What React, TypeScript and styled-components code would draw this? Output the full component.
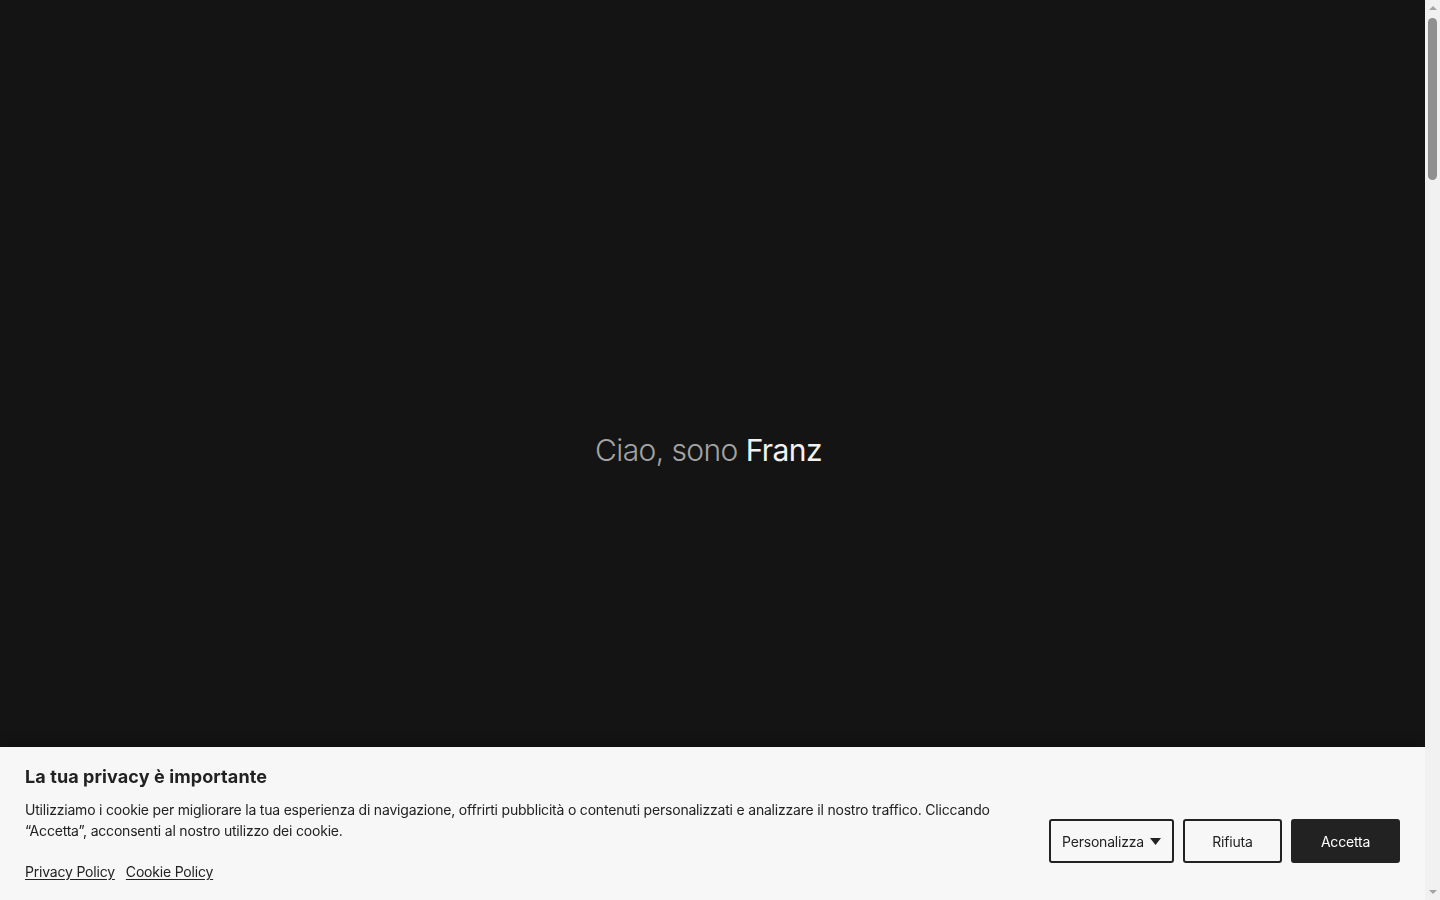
import React from 'react'
import styled, { createGlobalStyle } from 'styled-components'

const GlobalStyle = createGlobalStyle`
  html, body {
    margin: 0;
    padding: 0;
    background: #141414;
    font-family: Inter, "Noto Sans", "Liberation Sans", sans-serif;
  }
  * { box-sizing: border-box; }
`

// the window scroll rail, as the browser draws it
const ScrollRail = styled.div`
  position: fixed;
  top: 0;
  right: 0;
  width: 15px;
  height: 100vh;
  background: #f1f1f1;
  display: flex;
  flex-direction: column;
  align-items: center;
  z-index: 20;
`

const Arrow = styled.div<{ $down?: boolean }>`
  width: 0;
  height: 0;
  margin: ${(p) => (p.$down ? 'auto 0 6px' : '6px 0 0')};
  border-left: 4px solid transparent;
  border-right: 4px solid transparent;
  ${(p) => (p.$down ? 'border-top: 4px solid #a3a3a3;' : 'border-bottom: 4px solid #a3a3a3;')}
`

const Thumb = styled.div`
  width: 9px;
  height: 162px;
  margin-top: 8px;
  border-radius: 5px;
  background: #8f8f8f;
`

const Page = styled.main`
  min-height: 4830px;
  margin-right: 15px;
  background: #141414;
`

const Hero = styled.section`
  height: 900px;
  display: flex;
  align-items: center;
  justify-content: center;
`

const Greeting = styled.h1`
  margin: 0 8px 0 0;
  font-size: 30px;
  font-weight: 300;
  letter-spacing: -0.6px;
  color: #a3a3a3;
`

const Name = styled.span`
  color: #f2f2f2;
  font-weight: 400;
`

const Banner = styled.aside`
  position: fixed;
  left: 0;
  right: 15px;
  bottom: 0;
  height: 153px;
  background: #f7f7f7;
  box-shadow: 0 -2px 12px rgba(0, 0, 0, 0.35);
  padding: 20px 25px 0 25px;
  display: flex;
  align-items: flex-start;
  gap: 40px;
  color: #222;
  z-index: 10;
`

const Texts = styled.div`
  flex: 1;
  min-width: 0;
`

const Title = styled.h2`
  margin: 0 0 12px;
  font-size: 18px;
  font-weight: 700;
  letter-spacing: 0.1px;
  line-height: 20px;
`

const Body = styled.p`
  margin: 0;
  font-size: 14px;
  line-height: 21px;
  letter-spacing: -0.2px;
  max-width: 975px;
`

const Links = styled.div`
  display: flex;
  gap: 11px;
  margin-top: 20px;
`

const PolicyLink = styled.a`
  font-size: 14px;
  line-height: 21px;
  letter-spacing: -0.2px;
  color: #222;
  text-decoration: underline;
  text-underline-offset: 2px;
  cursor: pointer;
`

const Actions = styled.div`
  display: flex;
  gap: 9px;
  margin-top: 52px;
`

const Button = styled.button<{ $primary?: boolean; $width: number }>`
  width: ${(p) => p.$width}px;
  height: 44px;
  border: 2px solid #222;
  border-radius: 3px;
  background: ${(p) => (p.$primary ? '#222' : 'transparent')};
  color: ${(p) => (p.$primary ? '#fff' : '#222')};
  font-family: inherit;
  font-size: 14px;
  letter-spacing: -0.2px;
  display: flex;
  align-items: center;
  justify-content: center;
  gap: 6px;
  cursor: pointer;
`

const Caret = () => (
  <svg width="11" height="7" viewBox="0 0 11 7">
    <path d="M0 0h11L5.5 7z" fill="#222" />
  </svg>
)

export default function App() {
  return (
    <>
      <GlobalStyle />
      <Page>
        <Hero>
          <Greeting>
            Ciao, sono <Name>Franz</Name>
          </Greeting>
        </Hero>
      </Page>
      <Banner>
        <Texts>
          <Title>La tua privacy è importante</Title>
          <Body>
            Utilizziamo i cookie per migliorare la tua esperienza di navigazione, offrirti pubblicità o
            contenuti personalizzati e analizzare il nostro traffico. Cliccando “Accetta”, acconsenti al
            nostro utilizzo dei cookie.
          </Body>
          <Links>
            <PolicyLink>Privacy Policy</PolicyLink>
            <PolicyLink>Cookie Policy</PolicyLink>
          </Links>
        </Texts>
        <Actions>
          <Button $width={125}>
            Personalizza <Caret />
          </Button>
          <Button $width={99}>Rifiuta</Button>
          <Button $width={109} $primary>
            Accetta
          </Button>
        </Actions>
      </Banner>
      <ScrollRail>
        <Arrow />
        <Thumb />
        <Arrow $down />
      </ScrollRail>
    </>
  )
}
